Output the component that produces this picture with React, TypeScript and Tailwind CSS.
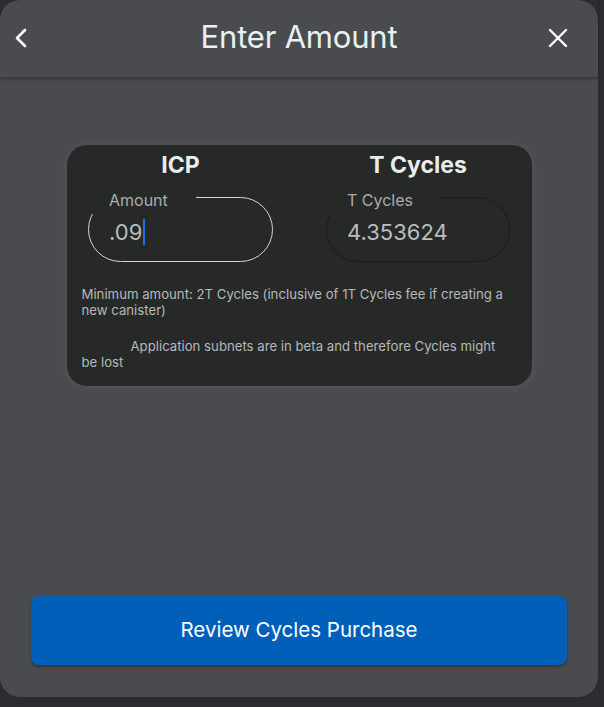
import React from "react";

export default function App() {
  return (
    <div
      className="w-[604px] h-[707px] bg-[#2b2c2f] overflow-hidden"
      style={{ fontFamily: "Inter, 'Noto Sans', sans-serif" }}
    >
      <div className="w-[598px] h-[697px] rounded-[20px] bg-[#4a4b4f] flex flex-col">
        {/* Header */}
        <div className="h-[78px] shrink-0 grid grid-cols-[1fr_auto_1fr] items-center px-[14px] border-b border-[#3b3c3f] shadow-[0_1px_3px_rgba(0,0,0,0.25)]">
          <div className="flex justify-start">
            <svg width="14" height="20" viewBox="0 0 14 20" className="mt-[-1px]">
              <path d="M11 2 L3 10 L11 18" fill="none" stroke="#ffffff" strokeWidth="2.6" strokeLinecap="round" strokeLinejoin="round" />
            </svg>
          </div>
          <div className="text-[31px] leading-[36px] text-[#e8f0f0] font-normal tracking-[-0.2px] mt-[-4px]">Enter Amount</div>
          <div className="flex justify-end">
            <svg width="20" height="20" viewBox="0 0 20 20" className="mr-[16px] mt-[-1px]">
              <path d="M2 2 L18 18 M18 2 L2 18" fill="none" stroke="#ffffff" strokeWidth="2.4" strokeLinecap="round" />
            </svg>
          </div>
        </div>

        {/* Card */}
        <div className="mt-[67px] mx-auto w-[465px] rounded-[20px] bg-[#272928] shadow-[0_1px_8px_rgba(255,255,255,0.08)] pt-[6px] pb-[16px] pl-[15px] pr-[18px]">
          <div className="flex justify-center gap-[53px] ml-[3px]">
            <div className="w-[185px] flex flex-col items-center">
              <div className="text-[23px] leading-[28px] font-bold text-[#e6eded]">ICP</div>
              <div className="relative mt-[18px] w-[185px] h-[65px] rounded-full border border-[#d4d6d6] flex items-center pl-[20px]">
                <div className="absolute left-[-2px] top-[-8px] h-[24px] w-[109px] bg-[#272928] pl-[22px] text-[16px] leading-[20px] text-[#a9aeae]">
                  Amount
                </div>
                <div className="mt-[4px] text-[22px] leading-[28px] text-[#b9bebe] flex items-center">
                  .09
                  <span className="inline-block w-[2px] h-[26px] bg-[#1a73e8] ml-[1px]" />
                </div>
              </div>
            </div>
            <div className="w-[184px] flex flex-col items-center">
              <div className="text-[23px] leading-[28px] font-bold text-[#e6eded]">T Cycles</div>
              <div className="relative mt-[18px] w-[184px] h-[65px] rounded-full border border-[#1a1b1b] flex items-center pl-[20px]">
                <div className="absolute left-[-2px] top-[-8px] h-[24px] w-[112px] bg-[#272928] pl-[22px] text-[16px] leading-[20px] text-[#a9aeae]">
                  T Cycles
                </div>
                <div className="mt-[4px] text-[22px] leading-[28px] text-[#b9bebe]">4.353624</div>
              </div>
            </div>
          </div>

          <div className="mt-[24px] text-[13.2px] leading-[16px] text-[#b4b9b9]">
            Minimum amount: 2T Cycles (inclusive of 1T Cycles fee if creating a new canister)
          </div>
          <div className="mt-[20px] text-[13.2px] leading-[16px] text-[#b4b9b9]">
            <span className="inline-block w-[49px]" />
            Application subnets are in beta and therefore Cycles might be lost
          </div>
        </div>

        {/* Button */}
        <div className="mt-auto mb-[32px] mx-[31px]">
          <button className="w-full h-[69px] rounded-[8px] bg-[#005fb8] text-white text-[20.5px] font-normal shadow-[0_2px_3px_rgba(0,0,0,0.3)]">
            Review Cycles Purchase
          </button>
        </div>
      </div>
    </div>
  );
}
